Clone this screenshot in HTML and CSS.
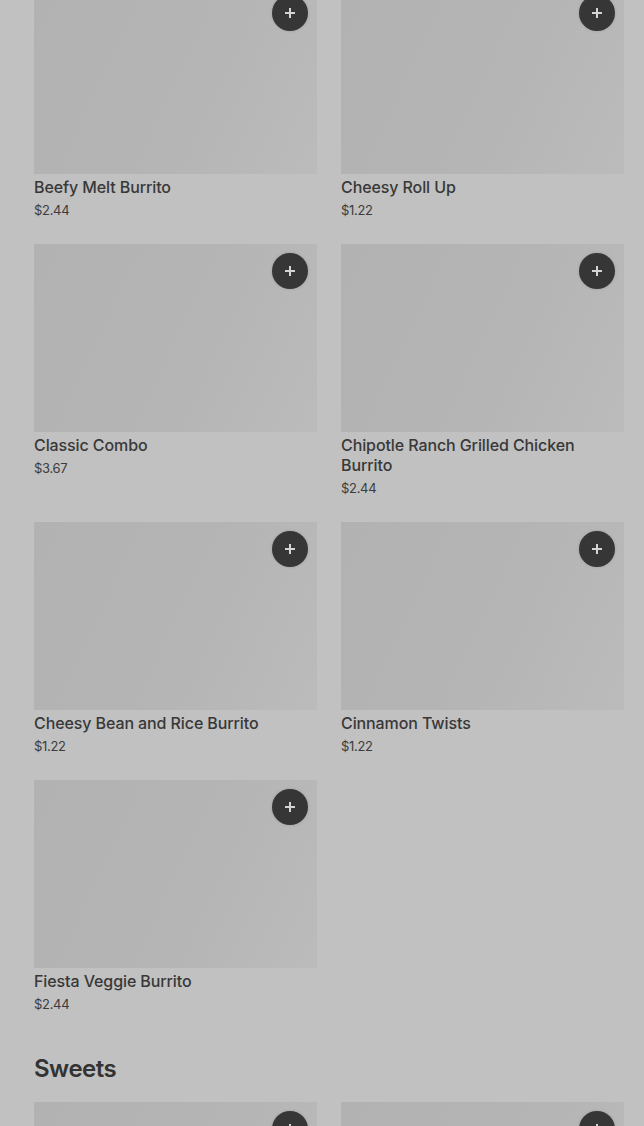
FILE: index.html
```html
<!doctype html>
<html>
<head>
<meta charset="utf-8">
<title>Menu</title>
<link rel="stylesheet" href="styles.css">
</head>
<body>
<div class="page">
	<ul class="grid">
		<li class="card">
			<div class="pic"><button class="add"><svg viewBox="0 0 12 12"><path d="M6 1v10M1 6h10"/></svg></button></div>
			<h3>Beefy Melt Burrito</h3>
			<p>$2.44</p>
		</li>
		<li class="card">
			<div class="pic"><button class="add"><svg viewBox="0 0 12 12"><path d="M6 1v10M1 6h10"/></svg></button></div>
			<h3>Cheesy Roll Up</h3>
			<p>$1.22</p>
		</li>
		<li class="card">
			<div class="pic"><button class="add"><svg viewBox="0 0 12 12"><path d="M6 1v10M1 6h10"/></svg></button></div>
			<h3>Classic Combo</h3>
			<p>$3.67</p>
		</li>
		<li class="card">
			<div class="pic"><button class="add"><svg viewBox="0 0 12 12"><path d="M6 1v10M1 6h10"/></svg></button></div>
			<h3>Chipotle Ranch Grilled Chicken Burrito</h3>
			<p>$2.44</p>
		</li>
		<li class="card">
			<div class="pic"><button class="add"><svg viewBox="0 0 12 12"><path d="M6 1v10M1 6h10"/></svg></button></div>
			<h3>Cheesy Bean and Rice Burrito</h3>
			<p>$1.22</p>
		</li>
		<li class="card">
			<div class="pic"><button class="add"><svg viewBox="0 0 12 12"><path d="M6 1v10M1 6h10"/></svg></button></div>
			<h3>Cinnamon Twists</h3>
			<p>$1.22</p>
		</li>
		<li class="card">
			<div class="pic"><button class="add"><svg viewBox="0 0 12 12"><path d="M6 1v10M1 6h10"/></svg></button></div>
			<h3>Fiesta Veggie Burrito</h3>
			<p>$2.44</p>
		</li>
	</ul>

	<h2>Sweets</h2>
	<ul class="grid">
		<li class="card">
			<div class="pic"><button class="add"><svg viewBox="0 0 12 12"><path d="M6 1v10M1 6h10"/></svg></button></div>
		</li>
		<li class="card">
			<div class="pic"><button class="add"><svg viewBox="0 0 12 12"><path d="M6 1v10M1 6h10"/></svg></button></div>
		</li>
	</ul>
</div>
</body>
</html>
```

FILE: styles.css
```css
*{padding:0; margin:0; box-sizing:border-box;}
html,body{background:#c1c1c1; overflow:hidden;}
body{font-family:Inter,"Noto Sans",sans-serif; color:#333;}
li{list-style:none;}

/* page is scrolled a little, first row sits under the top edge */
.page{padding:0 20px 0 34px; margin-top:-14px;}

.grid{display:grid; grid-template-columns:283px 283px; column-gap:24px; row-gap:24px;}
.card h3{font-size:16px; line-height:20px; font-weight:500; margin-top:3px; color:#383838; letter-spacing:-0.1px;}
.card p{font-size:13px; line-height:20px; margin-top:3px; color:#3c3c3c; letter-spacing:-0.3px;}

.pic{position:relative; height:188px; background:linear-gradient(115deg,#b2b2b2 0%,#b4b4b4 50%,#bbbbbb 100%);}
.add{position:absolute; top:9px; right:9px; width:36px; height:36px; border-radius:50%; border:none; background:#363636; display:flex; align-items:center; justify-content:center; box-shadow:0 0 3px rgba(0,0,0,.15);}
.add svg{width:12px; height:12px; fill:none; stroke:#d4d4d4; stroke-width:2;}

h2{font-size:24px; line-height:32px; font-weight:600; color:#333; margin:39px 0 17px; letter-spacing:-0.5px;}
```
